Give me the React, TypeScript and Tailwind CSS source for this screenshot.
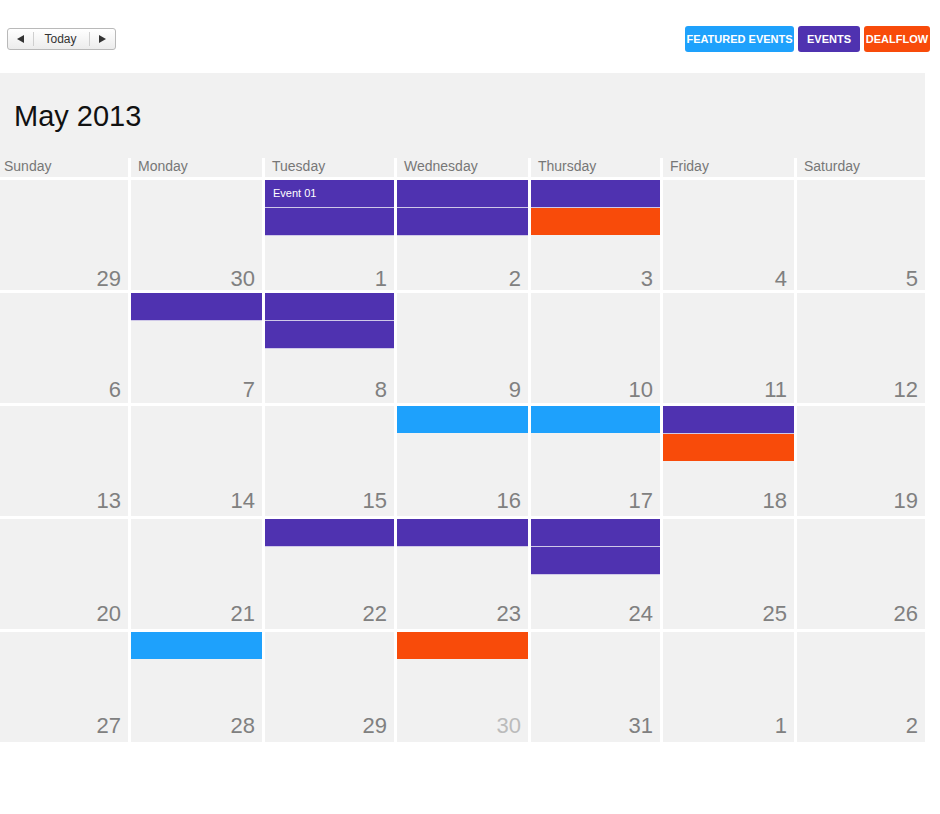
import React from "react";

type Ev = { color: "purple" | "orange" | "blue"; label?: string };
type Day = { n: number; muted?: boolean; events?: Ev[] };

const weeks: Day[][] = [
  [
    { n: 29 },
    { n: 30 },
    { n: 1, events: [{ color: "purple", label: "Event 01" }, { color: "purple" }] },
    { n: 2, events: [{ color: "purple" }, { color: "purple" }] },
    { n: 3, events: [{ color: "purple" }, { color: "orange" }] },
    { n: 4 },
    { n: 5 },
  ],
  [
    { n: 6 },
    { n: 7, events: [{ color: "purple" }] },
    { n: 8, events: [{ color: "purple" }, { color: "purple" }] },
    { n: 9 },
    { n: 10 },
    { n: 11 },
    { n: 12 },
  ],
  [
    { n: 13 },
    { n: 14 },
    { n: 15 },
    { n: 16, events: [{ color: "blue" }] },
    { n: 17, events: [{ color: "blue" }] },
    { n: 18, events: [{ color: "purple" }, { color: "orange" }] },
    { n: 19 },
  ],
  [
    { n: 20 },
    { n: 21 },
    { n: 22, events: [{ color: "purple" }] },
    { n: 23, events: [{ color: "purple" }] },
    { n: 24, events: [{ color: "purple" }, { color: "purple" }] },
    { n: 25 },
    { n: 26 },
  ],
  [
    { n: 27 },
    { n: 28, events: [{ color: "blue" }] },
    { n: 29 },
    { n: 30, muted: true, events: [{ color: "orange" }] },
    { n: 31 },
    { n: 1 },
    { n: 2 },
  ],
];

// date numbers sit a little higher in the later weeks
const rowPad = ["pb-0", "pb-[2px]", "pb-[4px]", "pb-[4px]", "pb-[5px]"];

const dayNames = ["Sunday", "Monday", "Tuesday", "Wednesday", "Thursday", "Friday", "Saturday"];

const barColor: Record<Ev["color"], string> = {
  purple: "bg-[#4f32b0] border-b border-[#cfc8e8]",
  orange: "bg-[#f84b0a] border-b border-[#f1f1f1]",
  blue: "bg-[#1ea1fc] border-b border-[#f1f1f1]",
};

function Arrow({ dir }: { dir: "left" | "right" }) {
  return (
    <svg width="7" height="8" viewBox="0 0 7 8">
      {dir === "left" ? (
        <polygon points="7,0 7,8 0,4" fill="#333" />
      ) : (
        <polygon points="0,0 0,8 7,4" fill="#333" />
      )}
    </svg>
  );
}

function DayCell({ day, pad }: { day: Day; pad: string }) {
  return (
    <div className={`flex h-[110px] flex-col bg-[#f1f1f1] ${pad}`}>
      {day.events?.map((ev, i) => (
        <div
          key={i}
          className={`h-[28px] pl-[8px] text-[11px] leading-[27px] text-white ${barColor[ev.color]}`}
        >
          {ev.label}
        </div>
      ))}
      <div
        className={`mt-auto pr-[7px] text-right text-[22px] leading-[22px] ${
          day.muted ? "text-[#bbbbbb]" : "text-[#808080]"
        }`}
      >
        {day.n}
      </div>
    </div>
  );
}

export default function App() {
  return (
    <div
      className="h-[814px] w-[940px] bg-white"
      style={{ fontFamily: '"Liberation Sans", Arial, sans-serif' }}
    >
      <div className="flex h-[73px] items-start justify-between pl-[7px] pr-[10px] pt-[26px]">
        <div className="mt-[2px] flex h-[22px] items-stretch rounded-[3px] border border-[#b9b9b9] bg-gradient-to-b from-white to-[#ececec] text-[12px] text-[#333]">
          <div className="flex w-[25px] items-center justify-center">
            <Arrow dir="left" />
          </div>
          <div className="my-[3px] w-px bg-[#cfcfcf]" />
          <div className="flex w-[55px] items-center justify-center pr-[2px]">Today</div>
          <div className="my-[3px] w-px bg-[#cfcfcf]" />
          <div className="flex w-[25px] items-center justify-center">
            <Arrow dir="right" />
          </div>
        </div>
        <div className="flex gap-[4px] text-[11px] font-bold uppercase text-white">
          <div className="flex h-[26px] w-[109px] items-center justify-center rounded-[3px] bg-[#1ea1fc]">
            Featured Events
          </div>
          <div className="flex h-[26px] w-[62px] items-center justify-center rounded-[3px] bg-[#4f32b0]">
            Events
          </div>
          <div className="flex h-[26px] w-[66px] items-center justify-center rounded-[3px] bg-[#f84b0a]">
            Dealflow
          </div>
        </div>
      </div>

      <div className="w-[925px] bg-[#f1f1f1]">
        <div className="flex h-[85px] items-center pl-[14px] pt-[2px] text-[29px] text-[#111]">May 2013</div>
        <div className="grid grid-cols-[128px_131px_129px_131px_129px_131px_128px] gap-[3px] bg-white">
          {dayNames.map((d, i) => (
            <div
              key={d}
              className={`h-[19px] bg-[#f1f1f1] text-[14px] leading-[17px] text-[#777] ${
                i === 0 ? "pl-[4px]" : "pl-[7px]"
              }`}
            >
              {d}
            </div>
          ))}
          {weeks.map((week, w) =>
            week.map((day, i) => <DayCell key={`${w}-${i}`} day={day} pad={rowPad[w]} />)
          )}
        </div>
      </div>
    </div>
  );
}
